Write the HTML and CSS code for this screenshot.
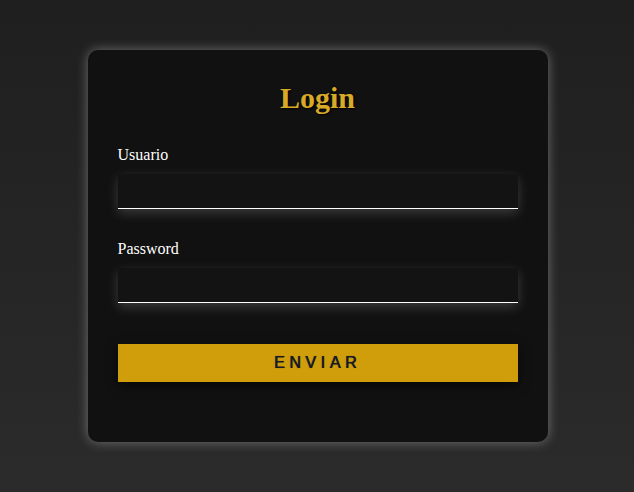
FILE: index.html
```html
<!DOCTYPE html>
<html lang="es">
<head>
<meta charset="utf-8">
<title>Login</title>
<link rel="stylesheet" href="styles.css">
</head>
<body>
<form class="card">
  <h2 class="title">Login</h2>
  <label class="label" for="u">Usuario</label>
  <input class="field" id="u" type="text">
  <label class="label label-2" for="p">Password</label>
  <input class="field" id="p" type="password">
  <button class="btn" type="button">ENVIAR</button>
</form>
</body>
</html>
```

FILE: styles.css
```css
html, body {
  margin: 0;
  height: 100%;
}
body {
  background: linear-gradient(#1f1f1f, #2b2b2b);
  display: flex;
  align-items: center;
  justify-content: center;
  padding-left: 1px;
  box-sizing: border-box;
  font-family: "Liberation Serif", "Times New Roman", serif;
}
.card {
  width: 460px;
  height: 392px;
  box-sizing: border-box;
  padding: 30px 30px 0;
  background: #111111;
  border-radius: 10px;
  box-shadow: 0 0 12px rgba(255, 255, 255, 0.35);
  display: flex;
  flex-direction: column;
}
.title {
  margin: 0;
  height: 36px;
  line-height: 36px;
  text-align: center;
  font-size: 30px;
  font-weight: bold;
  color: #d9a928;
  text-shadow: 1px 1px 2px rgba(0,0,0,1), 0 0 1px rgba(0,0,0,0.8);
}
.label {
  display: block;
  margin-top: 30px;
  height: 18px;
  line-height: 18px;
  font-size: 16px;
  color: #ffffff;
}
.label-2 {
  margin-top: 31px;
}
.field {
  display: block;
  margin-top: 10px;
  height: 35px;
  box-sizing: border-box;
  width: 100%;
  background: #131313;
  border: none;
  border-bottom: 1px solid #ffffff;
  outline: none;
  color: #fff;
  padding: 0 8px;
  box-shadow: 0 4px 12px rgba(255, 255, 255, 0.18);
}
.btn {
  margin-top: 41px;
  height: 38px;
  width: 100%;
  border: none;
  background: #d19e0b;
  color: #1a1a22;
  font-family: "Liberation Sans", Arial, sans-serif;
  font-size: 16px;
  font-weight: normal;
  letter-spacing: 4.6px;
  text-shadow: 0.5px 0 0 #1a1a22, 0 0 1px rgba(40, 40, 60, 0.7);
  box-shadow: 0 4px 10px rgba(0, 0, 0, 0.6);
  cursor: pointer;
  padding: 0;
}
```
